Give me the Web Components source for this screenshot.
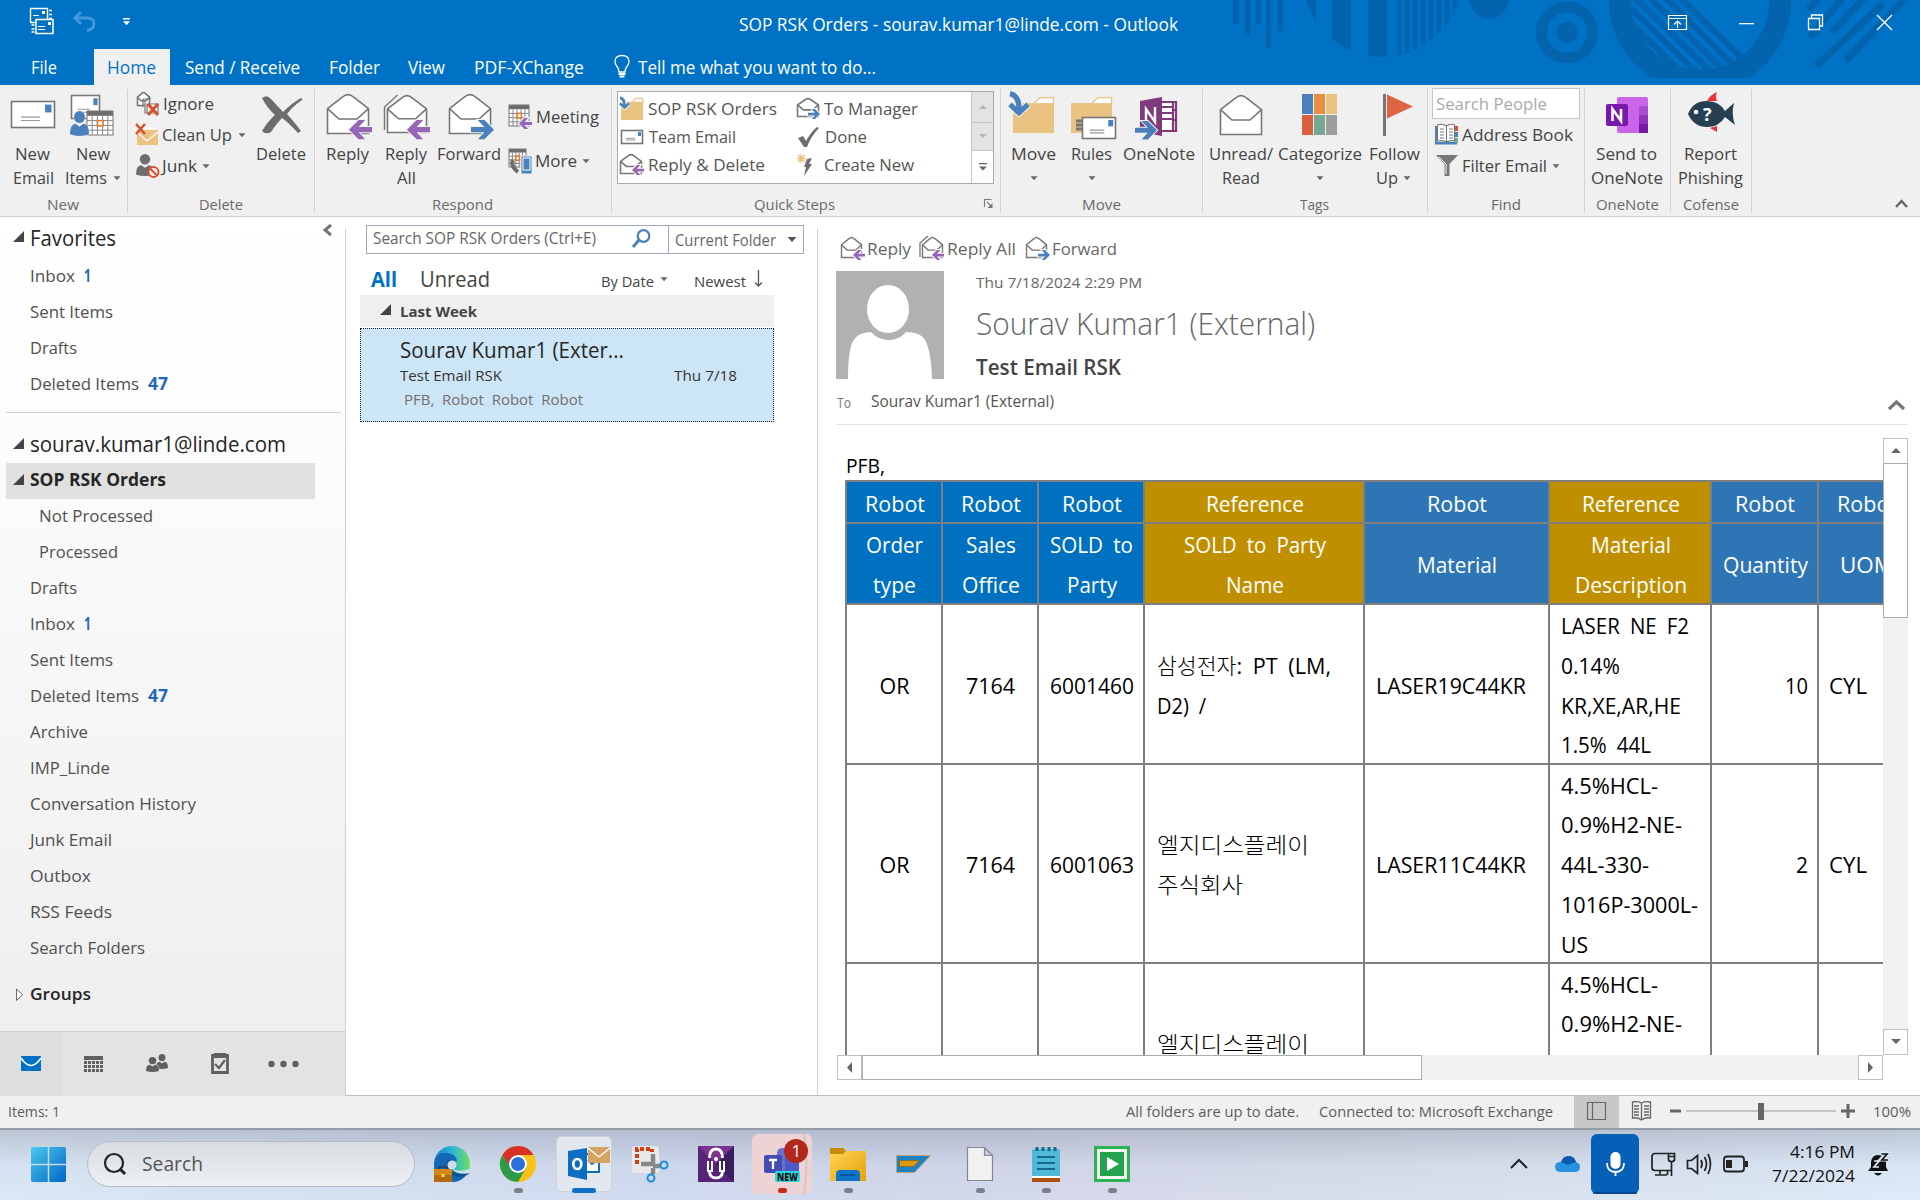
<!DOCTYPE html>
<html lang="en"><head><meta charset="utf-8"><title>SOP RSK Orders - Outlook</title>
<style>html,body{margin:0;padding:0;background:#fff}body{width:1920px;height:1200px;overflow:hidden}</style></head>
<body><mail-app></mail-app>
<script>
// Text label that condenses or expands to the advance width in its w attribute.
customElements.define('fit-text', class extends HTMLElement{
  connectedCallback(){
    if(this.shadowRoot) return;
    const r=this.attachShadow({mode:'open'});
    r.innerHTML='<style>:host{display:block;white-space:pre;flex:none}span{display:inline-block;transform-origin:0 50%}</style><span><slot></slot></span>';
    const w=+this.getAttribute('w'), s=r.querySelector('span');
    const n=s.getBoundingClientRect().width;
    this.style.width=w+'px';
    if(n) s.style.transform='scaleX('+(w/n).toFixed(4)+')';
  }
});
const fit=(t,w,s,st='')=>`<fit-text w="${w}" style="font-size:${s}px;${st}">${t}</fit-text>`;
// Row items: [left, width, html, top margin]
const row=(x0,h,items,st='')=>{
  let x=x0,o='';
  for(const [l,w,html,dy] of items){o+=`<div style="flex:none;margin-left:${+(l-x).toFixed(2)}px;width:${w}px;${dy?`margin-top:${dy}px;`:''}">${html}</div>`;x=l+w}
  return `<div style="display:flex;align-items:center;height:${h}px;line-height:${h}px;flex:none;${st}">${o}</div>`;
};
const T=(a,b,t,s,st,dy)=>[a,b-a,fit(t,b-a,s,st),dy];
// Icons share page coordinates through their viewBox
const svg=(x,y,w,h,b)=>`<svg width="${w}" height="${h}" viewBox="${x} ${y} ${w} ${h}" style="display:block;overflow:visible" fill="none">${b}</svg>`;
const I=(x,y,w,h,b,dy)=>[x,w,svg(x,y,w,h,b),dy];
const dd=(x,y,c='#666',s=3.5)=>`<path d="M${x-s} ${y-s/2}h${2*s}l${-s} ${s+.5}z" fill="${c}"/>`;
const D=(x,y=0,dy)=>I(x-4.5,-5,8,10,dd(x-.5,0),dy);
const rc=(x,y,w,h,f,e='')=>`<rect x="${x}" y="${y}" width="${w}" height="${h}" fill="${f}" ${e}/>`;
const P=(d,f,s,w=1.5,e='')=>`<path d="${d}" fill="${f||'none'}" ${s?`stroke="${s}" stroke-width="${w}"`:''} ${e}/>`;
const env=(x,y,w,h,c='#777',sw=1.6)=>P(`M${x} ${y+h*.36}L${x+w*.36} ${y+h*.07}Q${x+w*.5} ${y-h*.06} ${x+w*.64} ${y+h*.07}L${x+w} ${y+h*.36}V${y+h}H${x}Z`,'#fff',c,sw)+P(`M${x} ${y+h*.36}L${x+w*.28} ${y+h*.63}H${x+w*.72}L${x+w} ${y+h*.36}`,'none',c,sw);
const arr=(x,y,w,c,r,o='#f0f0f0')=>{const h=w*.84,k=r?`translate(${2*x+w} 0) scale(-1 1)`:'';
 return `<path transform="${k}" d="M${x} ${y+h/2}L${x+w*.42} ${y}H${x+w*.7}L${x+w*.42} ${y+h*.36}H${x+w}V${y+h*.64}H${x+w*.42}L${x+w*.7} ${y+h}H${x+w*.42}Z" fill="${c}" stroke="${o}" stroke-width="2" paint-order="stroke"/>`};
const PU='#9565b8',BL='#4a80bb',GR='#6d6d6d',TN='#eac282',RD='#d9512c';
const card=(x,y,w,h)=>rc(x,y,w,h,'#fff','stroke="#777" stroke-width="1.6"')+rc(x+w-w*.22,y+h*.12,w*.15,h*.3,BL)+P(`M${x+w*.22} ${y+h*.6}h${w*.44}m${-w*.44} ${h*.13}h${w*.44}`,0,'#999',1.1);
const cal=(x,y,w,h)=>{let s=rc(x,y,w,h,'#fff')+rc(x,y,w,h*.2,GR)+rc(x,y,w,h,'none','stroke="#777"');for(let i=1;i<5;i++)s+=P(`M${x+w*i/5} ${y+h*.2}V${y+h}`,0,'#888',1);for(let i=1;i<4;i++)s+=P(`M${x} ${y+h*(.2+.2*i)}H${x+w}`,0,'#888',1);return s+rc(x+w*.4,y+h*.4,w*.22,h*.22,'#fff',`stroke="#e07b30" stroke-width="1.6"`)};
const fold=(x,y,w,h)=>P(`M${x+w*.5} ${y+h*.2}l${w*.15} ${-h*.18}h${w*.34}v${h*.2}z`,'#fff',TN,1.2)+rc(x,y+h*.17,w,h*.83,TN);
const down=(x,y,s)=>{const d=`M${x} ${y+s*.08}q${s*.48} ${s*.1} ${s*.45} ${s*.85}`,e=`M${x} ${y+s*.62}l${s*.45} ${s*.42}l${s*.45} ${-s*.42}`;return P(d+e,0,'#f4f0ea',s*.26+2)+P(d+e,0,BL,s*.26)};
const man=(x,y,w,h,c)=>`<ellipse cx="${x+w/2}" cy="${y+h*.24}" rx="${w*.29}" ry="${h*.24}" fill="${c}"/>`+P(`M${x} ${y+h*.93}q0 ${-h*.42} ${w*.3} ${-h*.42}l${w*.2} ${h*.12}l${w*.2} ${-h*.12}q${w*.3} 0 ${w*.3} ${h*.42}q${-w*.5} ${h*.14} ${-w} 0z`,c);
const CSS=`<style>:host{display:block;box-sizing:border-box;flex:none}*{box-sizing:border-box}.r{display:flex}.c{display:flex;flex-direction:column}</style>`;
const comp=(n,f)=>customElements.define(n,class extends HTMLElement{connectedCallback(){if(!this.shadowRoot)this.attachShadow({mode:'open'}).innerHTML=CSS+f(this)}});

comp('header-art',()=>{let s='',c='#0363ad';
 [[1233,6,24],[1245,5,35],[1256,5,24],[1266,5,48],[1278,5,31]].forEach(([x,w,h])=>s+=rc(x,0,w,h,c));
 s+='<clipPath id="a"><circle cx="1382" cy="-22" r="79"/></clipPath><g clip-path="url(#a)">'+rc(1300,0,16,60,c)+rc(1332,0,19,60,c)+rc(1368,0,19,60,c);
 for(let i=0;i<8;i++)s+=rc(1397+i*8,0,4.5,60,c);
 s+='</g><ellipse cx="1489" cy="-2" rx="20" ry="20.5" fill="'+c+'"/><circle cx="1567" cy="32.5" r="25.5" stroke="'+c+'" stroke-width="11"/><circle cx="1567" cy="32.5" r="10.5" fill="'+c+'"/>';
 s+='<clipPath id="b"><rect x="1600" y="0" width="200" height="78"/></clipPath><clipPath id="d"><circle cx="1700" cy="0" r="72"/></clipPath><g clip-path="url(#b)"><circle cx="1700" cy="1" r="80" stroke="'+c+'" stroke-width="22"/><g clip-path="url(#d)">';
 for(let i=-1;i<5;i++)s+=P(`M${1608+i*15} -14l100 98`,0,c,6);
 s+='</g></g>'+P('M1820 -4l-12 14',0,c,8)+P('M1844 -4l-34 41M1868 -6l-36 38M1883 4l-67 62M1908 -4l-62 64',0,c,7);
 return svg(0,0,1920,85,s)});

comp('title-bar',()=>`<style>:host{position:relative;height:85px;background:#0072c6;color:#fff;overflow:hidden}header-art{position:absolute;left:0;top:0}.f{position:relative}.t{background:#f0f0f0;color:#0072c6}</style><header-art></header-art><div class="f">`+
 row(0,49,[
  I(30,8,24,34,P('M30.5 10.5h17v14h-17z',0,'#fff',1.4)+rc(42,13,3,3,'#fff')+P('M49 12.5h3m-3 4h3m-3 4h3M31.5 27h3m-3 4h3m-3 3h3',0,'#fff',1.4)+P('M36 21.5h17v14h-17z','#0072c6','#fff',1.5)+rc(48,24,3,3,'#fff')+P('M33 17.5h6M38 28.5h7m-7 3h7',0,'#fff',1.2),-3),
  I(73,8,24,34,P('M81 14l-6 6l6 6M76 20h10q8 0 8 5.500q0 6-7 7',0,'#3f97dc',3),-3),
  I(122,8,10,34,rc(123,20,7,1.500,'#fff')+dd(126.500,25,'#fff'),-4),
  T(739,1178,'SOP RSK Orders - sourav.kumar1@linde.com - Outlook',18),
  I(1668,8,20,34,P('M1668.500 15.500h18v14h-18zM1668.500 18.500h18M1677.500 28v-7m-3.500 3.500l3.500-3.500l3.500 3.500',0,'#fff',1.2)),
  I(1739,8,15,34,rc(1739,23,15,1.3,'#fff')),
  I(1808,8,16,34,P('M1808.500 18.500h11v11h-11zM1811.500 18v-3h11v11h-3',0,'#fff',1.3)),
  I(1877,8,16,34,P('M1877 15l15 15M1892 15l-15 15',0,'#fff',1.4))])+
 row(0,36,[T(31,57,'File',17.5,'',-1),
  [94,76,`<div class="t">${row(0,36,[T(13,62,'Home',17.5,'',-1)])}</div>`],
  T(185,300,'Send / Receive',17.5,'',-1),T(329,380,'Folder',17.5,'',-1),T(408,445,'View',17.5,'',-1),T(474,584,'PDF-XChange',17.5,'',-1),
  I(614,53,16,28,P('M619 72q0-3-2-5.500q-2-2.500-2-5q0-6 7-6t7 6q0 2.500-2 5t-2 5.500z',0,'#fff',1.3)+P('M618.500 74h7m-6 2.500h5',0,'#fff',2)),
  T(638,876,'Tell me what you want to do...',17.5,'',-1)])+'</div>');

// Ribbon group: a 107px body, a caption and a right-hand rule
const grp=(x,w,body,a,b,label,extra=[])=>`<div style="flex:none;width:${w}px;height:131px"><div style="height:107px;display:flex">${body}</div>${row(x,24,[T(a,b,label,15,'color:#6a6a6a'),...extra])}</div><div style="flex:none;width:1px;height:123px;margin-top:4px;background:#d2d2d2"></div>`;
// Tall buttons of a group: an icon row above two caption rows
const big=(x,w,icons,l1,l2)=>`<div style="flex:none;width:${w}px">${row(x,50,icons,'margin-top:5px')}${row(x,24,l1,'margin-top:2px;color:#444')}${row(x,24,l2||[],'color:#444')}</div>`;
const R=17;
comp('ribbon-bar',()=>{
 const bi=(x,w,b)=>I(x,90,w,50,b);
 const small=(x,w,rows,mt)=>`<div style="flex:none;width:${w}px;margin-top:${mt}px;color:#444">${rows.map(([h,i])=>row(x,h,i)).join('')}</div>`;
 let h='';
 h+=grp(0,127,big(0,127,[bi(11,44,card(11.5,101.5,43,26)),bi(70,43,card(71.500,95.500,28,23)+cal(87,111,26,24)+`<g stroke="#f0f0f0" paint-order="stroke">${man(70,111,19,25,BL)}</g>`)],
  [T(15,50,'New',R),T(76,110,'New',R)],[T(13,54,'Email',R),T(65,107,'Items',R),D(117)]),47,79,'New');
 h+=grp(128,186,small(128,124,[[31,[I(137,92,23,24,env(137.500,92.500,12,13)+P('M143 99v8M143 99h8M145 101v12h13M147 104h11v9h-11z','#fff','#777',1.2)+P('M148 104l10 11M158 104l-10 11',0,RD,3)),T(163,214,'Ignore',R)]],
   [31,[I(135,122,23,23,P('M137 129h21v15h-21z',TN)+P('M137 131l10 9l11-9M140 127h17',0,'#fff',1.200)+P('M136 123l9 10M145 123l-9 10',0,RD,2.500)),T(162,232,'Clean Up',R),D(242)]],
   [31,[I(136,152,24,25,man(136,153,18,22,GR)+'<circle cx="153.500" cy="171" r="5" fill="#f0f0f0" stroke="#d9512c" stroke-width="2"/>'+P('M150 167.500l7 7',0,RD,2)),T(162,197,'Junk',R),D(206)]]],3)+
  big(252,62,[bi(260,43,P('M262 98q5-4 9 1l12 13q9-9 18-14q2 1 1 2q-9 6-15 14q9 10 14 17l-3 2q-9-10-16-15q-5 5-11 14q-5 3-9-1q6-10 13-16q-8-7-13-17z',GR))],[T(256,306,'Delete',R)]),199,243,'Delete');
 h+=grp(315,296,big(315,190,[bi(327,45,env(327.500,94.500,41,39)+arr(349,120,23,PU)),bi(384,47,P('M384.500 130v-23l13-12',0,'#777',1.4)+env(387.500,95.500,39,37)+arr(407,120,23,PU)),bi(449,46,env(449.500,94.500,41,39)+arr(471,120,23,BL,1))],
  [T(326,369,'Reply',R),T(385,427,'Reply',R),T(437,501,'Forward',R)],[T(397,416,'All',R)])+
  small(505,106,[[44,[I(509,106,24,24,cal(509,106,20,21)+arr(519,119,13,PU)),T(536,599,'Meeting',R)]],[44,[I(509,149,24,25,cal(509,149,17,18)+rc(521,156,11,18,BL,'stroke="#f0f0f0"')+rc(523,158,7,12,BL,'stroke="#fff"')+P('M513 160q-3 6 5 12',0,GR,4)),T(535,577,'More',R),D(586)]]],10),432,493,'Respond');
 const q=(i)=>row(618,28,i);
 h+=grp(612,388,`<div style="margin:6px 0 0 5px;width:377px;height:93px;border:1px solid #ababab;background:#fff;display:flex;color:#555;flex:none"><div style="width:353px;padding-top:3px;flex:none">`+
  q([I(620,97,23,23,fold(621,97,22,22)+down(620,96,10)),T(648,777,'SOP RSK Orders',R),I(797,97,23,24,env(797.500,98.500,21,18)+arr(808,109,12,BL,1,'#fff')),T(824,918,'To Manager',R)])+
  q([I(620,126,23,23,card(621.500,130.500,21,13)),T(649,736,'Team Email',R),I(797,126,23,23,P('M798 138l5-2l3 5q5-9 11-14l2 1q-8 8-12 19h-3z',GR)),T(825,867,'Done',R)])+
  q([I(620,153,23,23,env(620.500,153.500,21,19)+arr(632,164,12,PU,0,'#fff')),T(648,765,'Reply &amp; Delete',R),I(797,153,23,23,P('M801 153v9M797 157.500h9M798 154l6.500 7M804.500 154l-6.500 7',0,TN,1.400)+P('M807 158l5-1l-3 6h3l-8 12l2-9h-2z',GR)),T(824,914,'Create New',R)])+
  `</div><div style="flex:1;border-left:1px solid #c6c6c6"><div style="height:31px;background:#e3e3e3;border-bottom:1px solid #c6c6c6;padding:10px 0 0 6px">${svg(0,0,10,10,P('M1 7l4-4l4 4z','#b5b5b5'))}</div><div style="height:28px;background:#e3e3e3;border-bottom:1px solid #c6c6c6;padding:8px 0 0 6px">${svg(0,0,10,10,P('M1 3l4 4l4-4z','#b5b5b5'))}</div><div style="padding:10px 0 0 6px">${svg(0,0,10,12,rc(1,2,8,1.300,'#666')+P('M1 5.500l4 4l4-4z','#666'))}</div></div></div>`,754,835,'Quick Steps',[I(984,200,10,10,P('M984.500 208v-7.500h7M987 203l4 4',0,'#777',1.1)+P('M992.500 204v5h-5z','#777'))]);
 h+=grp(1001,201,big(1001,201,[bi(1009,46,fold(1013,97,41,36)+down(1010,92,20)),bi(1071,46,fold(1071,97,41,36)+P('M1076 121h6m-6 4h6m-6 4h6',0,'#777',3)+card(1082.500,117.500,33,21)),bi(1135,44,P('M1161 102h15v29h-15M1161 107h12M1161 113h12M1161 119h12M1173 103v28M1176 110h-3m3 10h-3','#fff','#80397b',2.2)+P('M1140 101l22-4v39l-22-4z','#80397b')+P('M1146 123v-14l9 13v-15',0,'#fff',2.400)+arr(1135,121,22,BL,1))],
  [T(1011,1056,'Move',R),T(1071,1112,'Rules',R),T(1123,1195,'OneNote',R)],[D(1034),D(1092)]),1082,1121,'Move');
 h+=grp(1203,224,big(1203,224,[bi(1220,42,env(1220.500,95.500,41,39)),bi(1302,36,['#4a80bb','#e78e40','#eac282','#d9603f','#77a893','#9d9d9d'].map((c,i)=>rc(1302+(i%3)*12,i<3?94:115,11,20,c)).join('')),bi(1383,30,rc(1383,94,3,42,'#777')+P('M1387 94.500l26 12l-26 12z','#de6444'))],
  [T(1209,1273,'Unread/',R),T(1278,1362,'Categorize',R),T(1369,1420,'Follow',R)],[T(1222,1260,'Read',R),D(1320.500),T(1376,1398,'Up',R),D(1407.500)]),1300,1329,'Tags');
 h+=grp(1428,156,`<div style="flex:none;width:156px;padding:3px 0 0 4px;color:#444"><div style="width:148px;height:31px;border:1px solid #c6c6c6;background:#fff">${row(1433,30,[T(1436,1547,'Search People',R,'color:#aaa')])}</div>${row(1432,31,[I(1435,124,24,21,rc(1435,126,2,18,BL)+rc(1435,142,22,2.500,BL)+rc(1455,126,3,5,RD)+rc(1455,132,3,5,BL)+rc(1455,138,3,5,'#77a893')+P('M1446.500 126q-4-3-9-1v16q5-1 9 1q4-2 8-1v-16q-4-2-8 1v16M1440 129h4m-4 3h4m-4 3h4m-4 3h4M1449 129h4m-4 3h4m-4 3h4m-4 3h4','#fff','#777',1.1)),T(1462,1573,'Address Book',R)])}${row(1432,31,[I(1436,154,22,22,P('M1436 154h22l-8.500 9v12h-5v-12z','#777')+P('M1439 156l7 7v10',0,'#fff',1)),T(1462,1547,'Filter Email',R),D(1556)])}</div>`,1491,1521,'Find');
 h+=grp(1585,85,big(1585,85,[bi(1606,42,rc(1617,97,31,36,'#ca64ea','rx="2"')+rc(1639,106,9,9,'#ae4bd5')+rc(1639,115,9,9,'#9332bf')+rc(1639,124,9,9,'#7719aa')+rc(1606,104,22,22,'#7719aa','rx="2"')+P('M1612.500 121v-12l8.500 12v-12',0,'#fff',2.600))],[T(1596,1657,'Send to',R)],[T(1591,1663,'OneNote',R)]),1596,1659,'OneNote');
 h+=grp(1671,80,big(1671,80,[bi(1688,47,P('M1707 101q3-6 10-9q-2 4 0 9z','#e9303b')+P('M1710 128l7-2v6z','#e9303b')+P('M1688 114q5-13 19-13q12 0 18 10l9-8q-3 11 1 22l-10-8q-6 10-18 10q-13 0-19-13z','#263f52')+'<circle cx="1696" cy="112" r="2.300" fill="#fff"/><text x="1703" y="121" font-size="18" font-weight="700" fill="#fff">?</text>')],[T(1684,1737,'Report',R)],[T(1678,1743,'Phishing',R)]),1683,1739,'Cofense');
 return `<style>:host{height:132px;background:#f0f0f0;border-bottom:1px solid #d0d0d0}</style><div class="r">${h}<div style="padding:114px 0 0 143px">${svg(1896,199,13,10,P('M1897 207l5.500-6l5.500 6',0,'#666',2.400))}</div></div>`});

const tri=(x,y)=>I(x,y,12,12,P(`M${x} ${y+11}h11v-11z`,'#444'),-2);
comp('folder-pane',()=>{
 const f=(t,b,x=30,n,nb,ne)=>row(0,36,[T(x,b,t,17,'color:#505050',-2),...(n?[T(nb,ne,n,17,'font-weight:700;color:#1f68b8',-2)]:[])]);
 return `<style>:host{width:345px;height:878px;background:linear-gradient(#fff,#fdfdfd 20%,#efefef 92%)}</style>`+
 row(0,42,[tri(13,0),T(30,116,'Favorites',21,'color:#262626',-1),I(323,0,9,12,P('M331 1l-6 5l6 5',0,'#777',3),-17)])+
 f('Inbox',75,30,'1',84,91)+f('Sent Items',113)+f('Drafts',77)+f('Deleted Items',139,30,'47',148,168)+
 '<div style="height:1px;width:335px;margin:9px 0 13px 6px;background:#d0d0d0"></div>'+
 row(0,37,[tri(13,0),T(30,286,'sourav.kumar1@linde.com',21,'color:#262626')])+
 `<div style="margin-left:6px;width:309px;background:#e0e0e0">${row(6,36,[tri(13,0),T(30,166,'SOP RSK Orders',17,'font-weight:700;color:#262626',-3)])}</div>`+
 f('Not Processed',153,39)+f('Processed',118,39)+f('Drafts',77)+f('Inbox',75,30,'1',84,91)+f('Sent Items',113)+f('Deleted Items',139,30,'47',148,168)+f('Archive',88)+f('IMP_Linde',110)+f('Conversation History',196)+f('Junk Email',112)+f('Outbox',91)+f('RSS Feeds',112)+f('Search Folders',145)+
 row(0,36,[I(16,0,8,14,P('M16.500 1v11.500l6-5.700z','#fff','#666',1)),T(30,91,'Groups',17,'font-weight:600;color:#262626',-2)],'margin-top:10px')+
 `<div style="margin-top:18px;height:65px;border-top:1px solid #cfcfcf;background:#e3e3e3;display:flex"><div style="width:63px;background:#dedede;flex:none">${row(0,63,[I(21,1055,20,15,rc(21,1055,20,15,'#0072c6')+P('M21 1057q10 15 20 0',0,'#fff',1.500),-1)])}</div>`+
 row(63,63,[I(84,1055,19,16,rc(84,1055,19,4,'#606060')+[0,1,2].map(j=>[0,1,2,3,4].map(i=>rc(84+i*4,1060+j*4,3,3,'#606060')).join('')).join('')),
  I(146,1054,23,20,man(156,1054,12,15,'#606060')+`<g stroke="#e3e3e3" paint-order="stroke">${man(146,1057,13,15,'#606060')}</g>`),
  I(211,1052,18,23,P('M212.500 1055.500h15v17h-15z',0,'#606060',2.800)+rc(214,1053,12,5,'#606060')+P('M215 1064l4 4l6-8',0,'#606060',2.200)),
  I(268,1060,32,8,[271.500,283.500,295.500].map(x=>`<circle cx="${x}" cy="1064" r="3.200" fill="#606060"/>`).join(''))])+'</div>'});

comp('message-list',()=>`<style>:host{width:471px;padding-left:0}.s{margin:8px 0 0 20px;width:438px;height:29px;border:1px solid #a0a8b8;display:flex}.s>div:first-child{width:302px;border-right:1px solid #a0a8b8;flex:none}.sel{margin:1px 0 0 14px;width:414px;height:94px;background:#cde6f7;border:1px dotted #222;padding-top:6px}</style>
 <div class="s"><div>${row(367,25,[T(373,596,'Search SOP RSK Orders (Ctrl+E)',15.5,'color:#666',-1),I(632,229,19,20,'<circle cx="643.500" cy="236" r="5.800" stroke="#4a80bb" stroke-width="2.200"/>'+P('M639 240l-6 7',0,BL,3),1)])}</div>${row(669,28,[T(675,776,'Current Folder',16,'color:#666'),I(787,0,10,6,P('M787.500 0h9l-4.500 5z','#555'))])}</div>`+
 row(346,40,[T(371,397,'All',21,'font-weight:700;color:#0072c6',7),T(420,490,'Unread',21,'color:#444',7),T(601,654,'By Date',15,'color:#444',11),D(664.500,0,8),T(694,746,'Newest',15,'color:#444',11),I(754,270,9,18,P('M758.500 270v16M755 282.500l3.500 3.500l3.500-3.500',0,'#555',1.300),7)],'margin-top:1px')+
 `<div style="margin-left:14px;width:414px;height:32px;background:#efefef">${row(360,32,[tri(380,0),T(400,477,'Last Week',15,'font-weight:700;color:#444')])}</div>`+
 `<div class="sel">${row(361,29,[T(400,624,'Sourav Kumar1 (Exter...',21.5,'color:#262626')])}${row(361,23,[T(400,502,'Test Email RSK',15,'color:#333'),T(674,737,'Thu 7/18',15,'color:#333')])}${row(361,25,[T(404,583,'PFB,  Robot  Robot  Robot',15,'color:#707070')])}</div>`);

comp('order-table',()=>{
 const cw=[96,96,106,220,185,162,107,97],pl=[0,0,0,12,11,11,0,10];
 const cell=(i,bg,al,lines,col)=>`<div style="width:${cw[i]}px;background:${bg};color:${col};flex:none;border:solid #7f7f7f;border-width:2px 0 0 2px;display:flex;flex-direction:column;justify-content:center;align-items:${al};padding:3px ${al=='flex-end'?9:0}px 0 ${al=='flex-start'?pl[i]:al=='center'?1:0}px;line-height:39.8px">${lines.map(([t,w,k])=>fit(t,w,21.5,k||'')).join('')}</div>`;
 const B='#0070c0',G='#bf8f00',S='#2e75b6',bg=[B,B,B,G,S,G,S,S];
 const al=['center','center','center','flex-start','flex-start','flex-start','flex-end','flex-start'];
 const hr=(h,a)=>`<div class="r" style="height:${h}px">${a.map((l,i)=>cell(i,bg[i],'center',l,'#fff')).join('')}</div>`;
 const br=(h,a)=>`<div class="r" style="height:${h}px">${a.map((l,i)=>cell(i,'#fff',al[i],l,'#000')).join('')}</div>`;
 const L='font-weight:300';
 const ro=[['Robot',60]],re=[['Reference',98]],lg=[['엘지디스플레이',152,L],['주식회사',86,L]],d=[['4.5%HCL-',97],['0.9%H2-NE-',121],['44L-330-',88],['1016P-3000L-',137],['US',27]];
 return `<style>:host{font-family:"Open Sans","Noto Sans CJK KR",sans-serif;width:1038px;height:575px;overflow:hidden;word-spacing:5px}</style>`+
 hr(42,[ro,ro,ro,re,ro,re,ro,ro])+
 hr(81,[[['Order',57],['type',43]],[['Sales',50],['Office',58]],[['SOLD to',83],['Party',50]],[['SOLD to Party',142],['Name',58]],[['Material',80]],[['Material',80],['Description',112]],[['Quantity',85]],[['UOM',54]]])+
 br(160,[[['OR',30]],[['7164',49]],[['6001460',84]],[['<span style="font-weight:300">삼성전자</span>: PT (LM,',174],['D2) /',49]],[['LASER19C44KR',150]],[['LASER NE F2',128],['0.14%',59],['KR,XE,AR,HE',120],['1.5% 44L',90]],[['10',23]],[['CYL',38]]])+
 br(199,[[['OR',30]],[['7164',49]],[['6001063',84]],lg,[['LASER11C44KR',150]],d,[['2',12]],[['CYL',38]]])+
 br(199,[[],[],[],lg,[],d,[],[]])});

comp('reading-pane',()=>{
 const e=(x,c,r,all)=>I(x,236,24,24,(all?P(`M${x} 256v-14l8-7`,0,'#777',1.300):'')+env(x+(all?2.500:.5),236.500,20,20,'#777',1.400)+arr(x+12,249,12,c,r,'#fff'));
 const sb=(w,h,d,x='')=>`<div style="width:${w}px;height:${h}px;border:1px solid #c0c0c0;background:#fff;flex:none;${x}">${svg(0,0,23,23,P(d,'#666'))}</div>`;
 return `<style>:host{width:1102px;height:878px}</style>`+
 row(818,28,[e(841,PU),T(867,911,'Reply',17,'color:#666',-1),e(920,PU,0,1),T(947,1016,'Reply All',17,'color:#666',-1),e(1026,BL,1),T(1052,1117,'Forward',17,'color:#666',-1)],'margin-top:18px')+
 `<div class="r" style="margin:8px 0 0 18px;height:108px">${svg(836,271,108,108,rc(836,271,108,108,'#b1b1b1')+'<ellipse cx="888" cy="309" rx="21" ry="24" fill="#fff"/>'+P('M848 379q0-25 4-36q5-11 19-11q7 8 18 8q10 0 17-8q16 0 20 10q5 10 6 37z','#fff'))}<div>${row(944,24,[T(976,1142,'Thu 7/18/2024 2:29 PM',15,'color:#666',-2)])}${row(944,58,[T(976,1315,'Sourav Kumar1 (External)',31.5,'color:#666;font-weight:300',-2)])}${row(944,28,[T(976,1121,'Test Email RSK',21.5,'color:#444;font-weight:600')])}</div></div>`+
 row(818,44,[T(837,851,'To',15,'color:#777',2),T(871,1054,'Sourav Kumar1 (External)',16.5,'color:#555'),I(1888,401,17,11,P('M1889 410l7.500-7l7.500 7',0,'#777',3.200),8)])+
 `<div style="margin:1px 0 13px 18px;width:1072px;height:1px;background:#e1e1e1"></div>
 <div class="r"><div style="width:1065px;flex:none">${row(818,42,[T(846,885,'PFB,',19.5,'color:#000',14)])}<order-table style="margin-left:27px"></order-table></div>
 <div style="width:25px;height:617px;background:#f1f1f1">${sb(25,26,'M7 14h10l-5-5z')}<div style="height:155px;border:1px solid #ababab;background:#fff;margin-top:-1px"></div>${sb(25,26,'M7 9h10l-5 5z','margin-top:411px')}</div></div>
 <div class="r" style="margin-left:19px;width:1046px;height:25px;background:#f1f1f1">${sb(25,25,'M14 6v11l-5-5.500z')}<div style="width:560px;border:1px solid #ababab;background:#fff;flex:none"></div><div style="flex:1"></div>${sb(25,25,'M9 6v11l5-5.500z')}</div>`});

comp('status-bar',()=>{const c='color:#5c5c5c';return `<style>:host{height:33px;background:#f0f0f0;border-top:1px solid #c0c0c0}</style>`+
 row(0,32,[T(8,60,'Items: 1',15,c,-2),T(1126,1299,'All folders are up to date.',15,c,-2),T(1319,1553,'Connected to: Microsoft Exchange',15,c,-2),
 [1574,45,`<div style="background:#c8c8c8">${row(1574,32,[I(1587,1102,19,18,P('M1587.500 1102.500h18v17h-18zM1592.500 1102.500v17',0,'#666',1.200),-2)])}</div>`],
 I(1632,1101,20,20,P('M1641.500 1103q-4-2-9-1v16q5-1 9 2q4-3 9-2v-16q-5-1-9 1v17M1634 1106h5m-5 3h5m-5 3h5m-5 3h5M1644 1106h5m-5 3h5m-5 3h5m-5 3h5',0,'#666',1.300),-2),
 I(1670,1101,186,20,rc(1670,1109.500,11,3,'#666')+rc(1686,1110.500,150,1,'#999')+rc(1758,1103,6,17,'#666')+rc(1841,1109.500,14,3,'#666')+rc(1846.500,1104,3,14,'#666'),-2),
 T(1873,1911,'100%',15,c,-2)])});

comp('task-bar',()=>{
 const k=(x,w,b)=>I(x,1132,w,64,b,-2), dot=(x,c='#7c8088',w=9)=>rc(x,1188,w,5,c,'rx="2.500"');
 const defs='<defs><linearGradient id="w" x2="1" y2="1"><stop stop-color="#4cc8f0"/><stop offset="1" stop-color="#0067c5"/></linearGradient><linearGradient id="e" x2="1"><stop stop-color="#1b7fd0"/><stop offset=".5" stop-color="#2ab5d8"/><stop offset="1" stop-color="#6be05a"/></linearGradient><linearGradient id="y" x2="1" y2="1"><stop stop-color="#ffd75a"/><stop offset="1" stop-color="#e6a208"/></linearGradient></defs>';
 return `<style>:host{height:72px;border-top:2px solid #939da8;background:linear-gradient(rgba(120,125,145,.33),rgba(160,170,190,.1) 50%,transparent),linear-gradient(90deg,#dce8f5,#d1dcf0 32%,#d4d8ec 50%,#d9deeb 70%,#deebf8)}.p{width:328px;height:46px;border:1px solid #b2bdc9;border-radius:23px;background:linear-gradient(#d8dce2,#edf1f4)}</style>`+
 row(0,70,[k(31,35,defs+rc(31,1147,35,35,'url(#w)','rx="2"')+P('M48.500 1147v35M31 1164.500h35',0,'#ccd9e8',1.500)),
 [87,328,`<div class="p">${row(88,44,[I(104,1152,23,24,'<circle cx="114" cy="1163" r="9" stroke="#222" stroke-width="2.200"/>'+P('M120 1169l5 5',0,'#222',3)),T(142,203,'Search',20,'color:#555')])}</div>`,-2],
 k(434,36,defs+'<circle cx="452" cy="1164" r="18" fill="url(#e)"/>'+P('M434 1164q2-13 14-11q8 1 9 8q-11 1-5 9q6 5 16 3q-6 9-16 9q-18-1-18-18z','#1268b4')+P('M452 1160q-6 7 1 12q6 4 17 1l-3 2q-6 3-12 1q-10-5-7-16z','#0c4f91')+'<circle cx="452" cy="1165" r="4.500" fill="#d2dbe9"/>'+P('M455 1170q7 2 14-1v4q-10 2-16-3z','#d2dbe9')+rc(434,1169,18,13,'#b56b0d')+rc(434,1169,18,6,'#d48812')+rc(441.500,1174,3,3,'#ffd65a')+P('M439 1169v-2h8v2',0,'#333',1.200)),
 k(500,36,'<circle cx="518" cy="1164" r="18" fill="#fbc116"/>'+P('M518 1155h15.600a18 18 0 0 0-31.200 0l8 13z','#d93025')+P('M502.400 1155a18 18 0 0 0 15.600 27l8-14h-15z','#2c9a48')+'<circle cx="518" cy="1164" r="9" fill="#fff"/><circle cx="518" cy="1164" r="7" fill="#2a6fe0"/>'+dot(514)),
 k(556,56,rc(556.500,1136.500,55,55,'#e3e7f0','rx="5" stroke="#ccd1dd"')+P('M584 1154h15v18h-15M588 1160l4 4l7-5','#fff','#0a6fc2',2)+P('M568 1151l19-3v32l-19-4z','#0a6fc2')+'<ellipse cx="577.300" cy="1164" rx="4" ry="5" stroke="#fff" stroke-width="2.700"/>'+rc(588,1147,22,16,'#d5a465')+P('M588 1148l11 9l11-9',0,'#fff',1.300)+dot(572,'#0f6fc9',24)),
 k(632,36,rc(632,1146,27,27,'#e9e9e9','rx="3"')+P('M637 1164v-15h15v3',0,'#d43d12',4,'stroke-dasharray="4 2"')+P('M641 1164h12v-10M653 1166h7M653 1168v6',0,'#888',4.500)+'<circle cx="664" cy="1165" r="3.500" stroke="#1a8fdc" stroke-width="2"/><circle cx="651" cy="1178" r="3.500" stroke="#1a8fdc" stroke-width="2"/>'),
 k(698,36,rc(698,1146,36,36,'#572478')+P('M698 1146h36l-18 18z','#7c3290')+P('M734 1146v36l-18-18z','#3a1d5d')+P('M709.500 1158q0-9 6.500-9t6.500 9M709.500 1171q0 7 6.500 7t6.500-7',0,'#fff',2.800)+P('M708 1161v10h4v-10M724 1161v10h-4v-10',0,'#fff',2)+'<circle cx="716" cy="1159" r="2" fill="#fff"/>'),
 k(752,60,rc(752,1134,60,60,'#eed3d5','rx="6"')+P('M804 1134q5 30 0 60',0,'#d9c3cc',2)+rc(777,1148,14,28,'#6670cf','rx="5"')+rc(785,1156,14,18,'#5059c9','rx="3"')+rc(764,1155,18,18,'#454db5','rx="2"')+P('M769 1160h8M773 1160v9',0,'#fff',2.300)+rc(775,1171,25,11,'#28dada','rx="2"')+'<text x="777" y="1180.500" font-size="10.500" font-weight="800" textLength="21" lengthAdjust="spacingAndGlyphs" fill="#111">NEW</text><circle cx="796" cy="1151" r="12" fill="#b3261c"/><text x="791.500" y="1157" font-size="17" fill="#fff">1</text>'+dot(778,'#c42b1c')),
 k(830,36,defs+P('M830 1148h13l3 3h20v30h-36z','url(#y)')+P('M830 1148h13l3 3l-3 3h-13z','#c78c05')+P('M836 1181v-7q0-4 4-4h16q4 0 4 4v7z','#0b74c8')+rc(840,1174,15,2,'#08569d')+dot(844)),
 k(896,36,P('M896.500 1155.500h34l-16 17h-18z','#1f82c2','#bca673',1)+P('M899.500 1160.500h20l-6 6h-14z','#d99a0f','#8a7020',1)),
 k(967,26,P('M967.500 1147.500h17l8 8v25h-25zM984.500 1147.500v8h8','#f1f1f1','#888',1.200)+dot(976)),
 k(1032,28,rc(1032,1149,28,29,'#4fb9d7','rx="2"')+P('M1037 1147v4M1043 1147v4M1049 1147v4M1055 1147v4',0,'#136b8b',3)+P('M1037 1157h18m-18 6h18m-18 6h18',0,'#136b8b',1.800)+rc(1032,1176,28,2,'#fff')+rc(1032,1178,28,4,'#b0500e')+dot(1042)),
 k(1094,36,rc(1094,1146,36,36,'#2bb457')+rc(1098.500,1150.500,27,27,'#23a34b','stroke="#eef8f0" stroke-width="3"')+P('M1107 1157l12 7l-12 7z','#fff')+dot(1108)),
 k(1511,17,P('M1511 1168l8-8l8 8',0,'#222',2)),
 k(1555,24,P('M1561 1172q-6 0-6-5q0-5 6-5q2-6 8-6q5 0 7 6q4 1 4 5t-4 5z','#2792e0')+P('M1561 1162q2-6 8-6q5 0 7 6l-8 3z','#0d59ac')),
 k(1591,48,rc(1591,1134,48,60,'#0760b8','rx="6"')+P('M1593 1193h44',0,'#043f7e',1.500)+rc(1610.500,1152,10,17,'#fff','rx="5"')+P('M1607 1163q0 9 8.500 9t8.500-9M1615.500 1172v4',0,'#fff',1.800)),
 k(1651,24,P('M1668 1153.500h-13q-3 0-3 3v11q0 3 3 3h16M1660 1170v4M1655 1175h12M1667.500 1170v5',0,'#222',1.700)+P('M1668.500 1153.500h6v6q0 2-3 2t-3-2zM1668 1156.500h7M1671.500 1162v14',0,'#222',1.700)),
 k(1687,25,P('M1687.500 1160.500h4l6-5v18l-6-5h-4zM1701 1160q2 4 0 8M1704.500 1157q4 7 0 14M1708 1154q5 10 0 20',0,'#222',1.700)),
 k(1723,25,rc(1724,1156.500,20,15,'none','rx="3" stroke="#222" stroke-width="1.800"')+rc(1726,1160,6,8,'#222')+rc(1745,1161,3,6,'#222')),
 [1772,83,`<div class="c">${row(1772,24,[T(1790,1855,'4:16 PM',16.5,'color:#111')])}${row(1772,24,[T(1772,1855,'7/22/2024',16.5,'color:#111')])}</div>`,-2],
 k(1868,22,P('M1868 1171l3-4v-5q1-7 7-7t8 6v6l2 4z','#111')+P('M1874 1173q4 5 8 0z','#111')+P('M1874 1161h5l-5 6h5',0,'#dde8f4',1.700)+P('M1881 1153.500h6l-6 6h7',0,'#dde8f4',4)+P('M1881.500 1154h5.500l-5 6h6',0,'#111',1.700))])});

comp('mail-app',()=>`<style>:host{width:1920px;height:1200px;overflow:hidden;font-family:"Open Sans","Noto Sans CJK KR",sans-serif;background:#fff}.m{display:flex;height:878px}.v{width:1px;height:866px;margin-top:12px;background:#d0d0d0;flex:none}</style>
<title-bar></title-bar><ribbon-bar></ribbon-bar><div class="m"><folder-pane></folder-pane><div class="v"></div><message-list></message-list><div class="v"></div><reading-pane></reading-pane></div><status-bar></status-bar><task-bar></task-bar>`);
</script></body></html>
